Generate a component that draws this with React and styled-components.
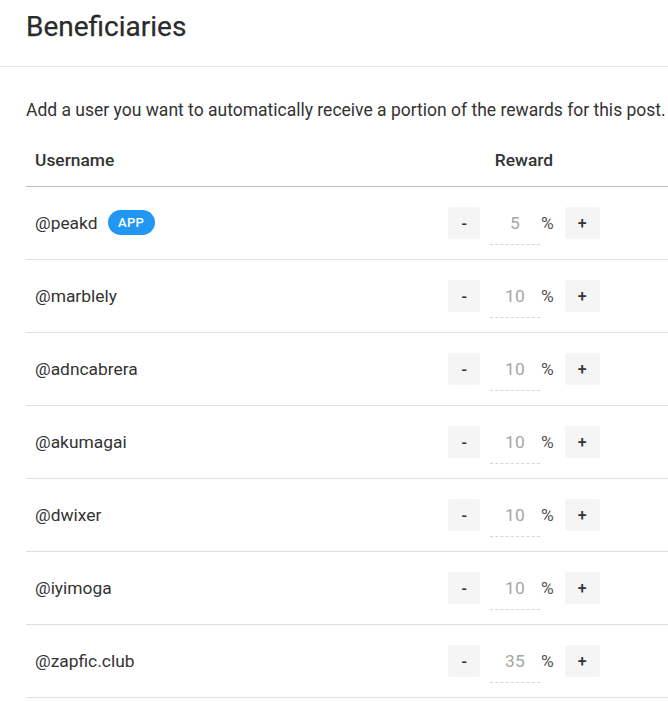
import React from "react";
import styled, { createGlobalStyle } from "styled-components";

const GlobalStyle = createGlobalStyle`
  html, body {
    margin: 0;
    padding: 0;
    background: #fff;
  }
  body {
    font-family: Roboto, "Liberation Sans", Arial, sans-serif;
    color: #333;
    overflow: hidden;
  }
`;

const beneficiaries = [
  { name: "peakd", weight: 5, app: true },
  { name: "marblely", weight: 10 },
  { name: "adncabrera", weight: 10 },
  { name: "akumagai", weight: 10 },
  { name: "dwixer", weight: 10 },
  { name: "iyimoga", weight: 10 },
  { name: "zapfic.club", weight: 35 },
];

function App() {
  return (
    <>
      <GlobalStyle />
      <Page>
        <Header>
          <Title>Beneficiaries</Title>
        </Header>
        <Body>
          <Description>
            Add a user you want to automatically receive a portion of the rewards for this post.
          </Description>
          <Table>
            <HeadRow>
              <HeadCell>Username</HeadCell>
              <HeadCell center>Reward</HeadCell>
            </HeadRow>
            {beneficiaries.map((b) => (
              <Row key={b.name}>
                <UserCell>
                  @{b.name}
                  {b.app && <Badge>APP</Badge>}
                </UserCell>
                <RewardCell>
                  <StepButton>-</StepButton>
                  <Amount>{b.weight}</Amount>
                  <Percent>%</Percent>
                  <StepButton>+</StepButton>
                </RewardCell>
              </Row>
            ))}
          </Table>
        </Body>
      </Page>
    </>
  );
}

export default App;

const Page = styled.div`
  width: 668px;
  height: 701px;
  overflow: hidden;
`;

const Header = styled.div`
  height: 67px;
  padding: 10px 26px 0;
  box-sizing: border-box;
  border-bottom: 1px solid #e8e8e8;
`;

const Title = styled.h1`
  margin: 0;
  font-size: 28px;
  line-height: 34px;
  font-weight: 400;
  color: #2b2b2b;
  -webkit-text-stroke: 0.25px #2b2b2b;
`;

const Body = styled.div`
  padding: 31px 0 0 26px;
`;

const Description = styled.p`
  margin: 0;
  font-size: 17.5px;
  line-height: 24px;
  color: #333;
  white-space: nowrap;
`;

const Table = styled.div`
  margin-top: 16px;
`;

const HeadRow = styled.div`
  display: grid;
  grid-template-columns: 1fr 288px;
  padding: 10px 0 14px;
  border-bottom: 1px solid #bdbdbd;
`;

const HeadCell = styled.div`
  font-size: 17.4px;
  line-height: 24px;
  font-weight: 500;
  color: #333;
  padding-left: ${(p) => (p.center ? "0" : "9px")};
  text-align: ${(p) => (p.center ? "center" : "left")};
`;

const Row = styled.div`
  display: grid;
  grid-template-columns: 1fr 288px;
  align-items: center;
  height: 73px;
  box-sizing: border-box;
  border-bottom: 1px solid #e0e0e0;
`;

const UserCell = styled.div`
  display: flex;
  align-items: center;
  gap: 10px;
  padding-left: 9px;
  padding-bottom: 1px;
  font-size: 17.4px;
  color: #333;
`;

const Badge = styled.span`
  display: inline-flex;
  align-items: center;
  justify-content: center;
  height: 25px;
  width: 47px;
  border-radius: 13px;
  background: #2196f3;
  color: #fff;
  font-size: 13px;
  font-weight: 500;
  letter-spacing: 0.3px;
`;

const RewardCell = styled.div`
  display: flex;
  align-items: center;
  justify-content: center;
`;

const StepButton = styled.button`
  height: 32px;
  padding: 0 13px;
  border: none;
  border-radius: 2px;
  background: #f5f5f5;
  color: #333;
  font-family: inherit;
  font-size: 16px;
  font-weight: 500;
  cursor: pointer;
`;

const Amount = styled.div`
  width: 50px;
  height: 44px;
  margin-left: 10px;
  display: flex;
  align-items: center;
  justify-content: center;
  border-bottom: 1px dashed #d6d6d6;
  box-sizing: border-box;
  padding-top: 1px;
  font-size: 17.4px;
  color: #a6a6a6;
`;

const Percent = styled.span`
  margin: 0 11px 0 1px;
  font-size: 17.4px;
  color: #555;
`;
